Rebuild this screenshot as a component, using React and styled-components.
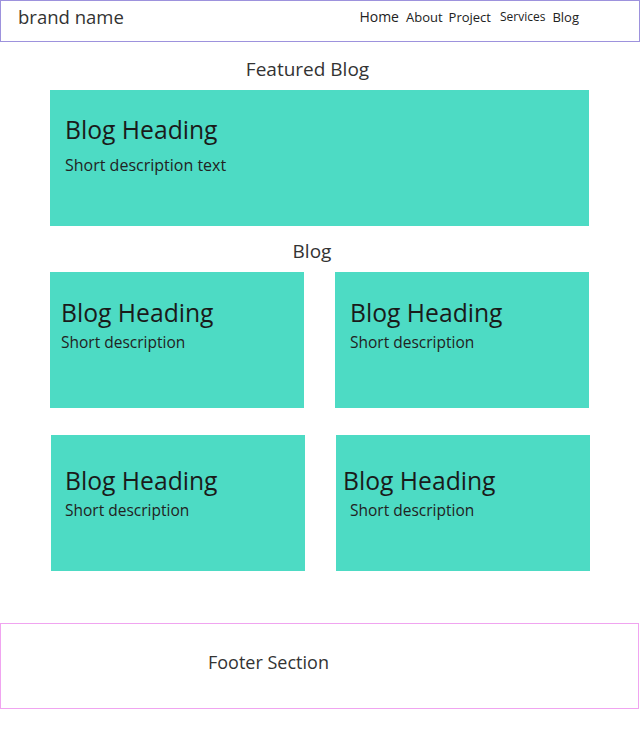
import React from 'react'
import styled, { createGlobalStyle } from 'styled-components'

const GlobalStyle = createGlobalStyle`
  body {
    margin: 0;
    background: #fff;
    font-family: 'Open Sans', 'Liberation Sans', sans-serif;
    color: #222;
  }
`

const Header = styled.header`
  display: flex;
  align-items: flex-start;
  justify-content: space-between;
  height: 40px;
  border: 1px solid #9d92dd;
  box-sizing: content-box;
`

const Brand = styled.div`
  padding: 4px 0 0 17px;
  font-size: 18.5px;
  line-height: 24px;
  color: #333;
`

const Nav = styled.nav`
  display: flex;
  align-items: center;
  padding-top: 6px;
  margin-right: 60px;
`

const NavLink = styled.a`
  font-size: ${p => p.size}px;
  line-height: 20px;
  margin-left: ${p => p.gap}px;
  color: #222;
  text-decoration: none;
`

const SectionTitle = styled.h2`
  margin: ${p => p.top}px 0 8px;
  padding-right: ${p => p.shift}px;
  font-size: 19px;
  font-weight: 400;
  line-height: 26px;
  text-align: center;
  color: #333;
`

const Card = styled.div`
  background: #4ddbc4;
  height: 136px;
  box-sizing: border-box;
  padding-top: ${p => p.padTop}px;
`

const FeaturedCard = styled(Card)`
  margin: 0 51px 0 50px;
`

const Heading = styled.h3`
  margin: 0;
  padding-left: ${p => p.pad}px;
  font-size: 24.7px;
  font-weight: 400;
  line-height: 34px;
  color: #1a1a1a;
`

const Desc = styled.p`
  margin: ${p => p.gap}px 0 0;
  padding-left: ${p => p.pad}px;
  font-size: ${p => p.size}px;
  line-height: 22px;
  color: #222;
`

const Grid = styled.div`
  display: grid;
  grid-template-columns: 254px 254px;
  column-gap: 31px;
  margin-left: ${p => p.left}px;
  margin-top: ${p => p.top}px;
`

const Footer = styled.footer`
  margin-top: 52px;
  height: 76px;
  border: 1px solid #f0a4f0;
  display: flex;
  align-items: center;
  padding: 0 0 8px 207px;
  box-sizing: content-box;
  margin-right: 1px;
  font-size: 18px;
  color: #333;
`

const navItems = [
  { label: 'Home', size: 14, gap: 0 },
  { label: 'About', size: 13, gap: 7 },
  { label: 'Project', size: 13, gap: 6 },
  { label: 'Services', size: 12, gap: 9 },
  { label: 'Blog', size: 13, gap: 7 },
]

const rows = [
  {
    left: 50,
    top: 0,
    cards: [
      { padTop: 24, head: 11, desc: 11 },
      { padTop: 24, head: 15, desc: 15 },
    ],
  },
  {
    left: 51,
    top: 27,
    cards: [
      { padTop: 29, head: 14, desc: 14 },
      { padTop: 29, head: 7, desc: 14 },
    ],
  },
]

const App = () => {
  return (
    <>
      <GlobalStyle />
      <Header>
        <Brand>brand name</Brand>
        <Nav>
          {navItems.map(n => (
            <NavLink key={n.label} href="#" size={n.size} gap={n.gap}>{n.label}</NavLink>
          ))}
        </Nav>
      </Header>

      <SectionTitle top={14} shift={25}>Featured Blog</SectionTitle>
      <FeaturedCard padTop={23}>
        <Heading pad={15}>Blog Heading</Heading>
        <Desc pad={15} gap={7} size={16}>Short description text</Desc>
      </FeaturedCard>

      <SectionTitle top={12} shift={16}>Blog</SectionTitle>
      {rows.map((row, i) => (
        <Grid key={i} left={row.left} top={row.top}>
          {row.cards.map((c, j) => (
            <Card key={j} padTop={c.padTop}>
              <Heading pad={c.head}>Blog Heading</Heading>
              <Desc pad={c.desc} gap={1} size={15.5}>Short description</Desc>
            </Card>
          ))}
        </Grid>
      ))}

      <Footer>Footer Section</Footer>
    </>
  )
}

export default App
